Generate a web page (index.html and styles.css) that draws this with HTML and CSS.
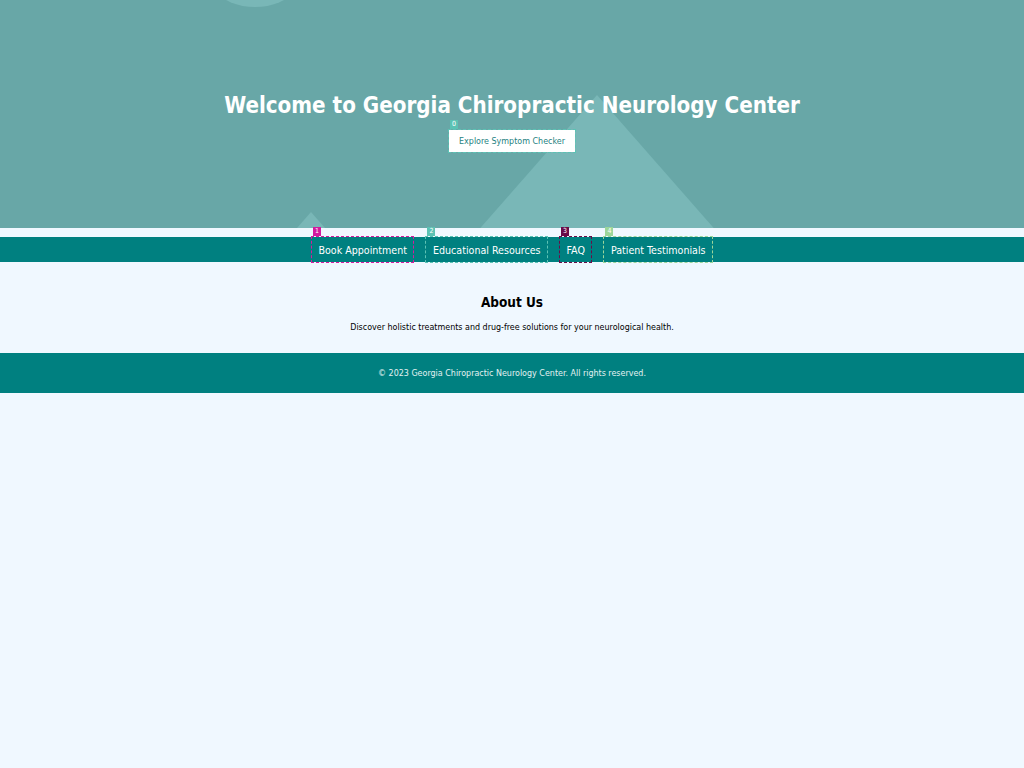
FILE: index.html
```html
<!DOCTYPE html>
<html lang="en">
<head>
<meta charset="utf-8">
<title>Georgia Chiropractic Neurology Center</title>
<link rel="stylesheet" href="styles.css">
</head>
<body>
<header class="hero">
  <svg class="hero-shapes" viewBox="0 0 1024 228" width="1024" height="228" aria-hidden="true">
    <circle cx="255" cy="-57" r="64" fill="#79b7b7"/>
    <polygon points="597,95 740,258 454,258" fill="#79b7b7"/>
    <polygon points="311,212 346,252 276,252" fill="#79b7b7"/>
  </svg>
  <div class="hero-content">
    <h1 class="hero-title">Welcome to Georgia Chiropractic Neurology Center</h1>
    <a class="cta mark mark-0" href="#">Explore Symptom Checker<span class="badge">0</span></a>
  </div>
</header>
<nav class="nav">
  <a class="nav-link mark mark-1" href="#">Book Appointment<span class="badge">1</span></a>
  <a class="nav-link mark mark-2" href="#">Educational Resources<span class="badge">2</span></a>
  <a class="nav-link mark mark-3" href="#">FAQ<span class="badge">3</span></a>
  <a class="nav-link mark mark-4" href="#">Patient Testimonials<span class="badge">4</span></a>
</nav>
<section class="about">
  <h2 class="about-title">About Us</h2>
  <p class="about-text">Discover holistic treatments and drug-free solutions for your neurological health.</p>
</section>
<footer class="footer">
  <p class="footer-text">© 2023 Georgia Chiropractic Neurology Center. All rights reserved.</p>
</footer>
</body>
</html>
```
FILE: styles.css
```css
* { box-sizing: border-box; }

body {
  margin: 0;
  background: #f0f8ff;
  font-family: "DejaVu Sans Condensed", "DejaVu Sans", "Liberation Sans", sans-serif;
  font-stretch: condensed;
  color: #000;
}

.hero {
  position: relative;
  height: 228px;
  background: #68a7a7;
  overflow: hidden;
}

.hero-shapes {
  position: absolute;
  left: 0;
  top: 0;
  display: block;
}

.hero-content {
  position: relative;
  display: flex;
  flex-direction: column;
  align-items: center;
  padding-top: 91px;
}

.hero-title {
  margin: 0;
  font-size: 22.2px;
  line-height: 28px;
  font-weight: bold;
  color: #fff;
}

.cta {
  position: relative;
  margin-top: 11px;
  display: block;
  background: #fff;
  color: #1f8282;
  text-decoration: none;
  font-size: 8.9px;
  line-height: 10px;
  padding: 6px 10px;
  white-space: nowrap;
}

.mark { outline: 1px dashed; outline-offset: 0; }
.mark-0 { outline-color: #5cc2b4; }
.mark-1 { outline-color: #d41a9e; }
.mark-2 { outline-color: #5cc2b4; }
.mark-3 { outline-color: #6a0c48; }
.mark-4 { outline-color: #9cd69a; }

.badge {
  position: absolute;
  left: 1px;
  top: -10px;
  width: 8px;
  height: 9px;
  font-size: 7px;
  line-height: 9px;
  text-align: center;
  color: #fff;
}
.mark-0 .badge { background: #5cc2b4; }
.mark-1 .badge { background: #d41a9e; }
.mark-2 .badge { background: #5cc2b4; }
.mark-3 .badge { background: #6a0c48; }
.mark-4 .badge { background: #9cd69a; }

.nav {
  margin-top: 9px;
  height: 25px;
  background: #008080;
  display: flex;
  justify-content: center;
  align-items: stretch;
  gap: 13px;
}

.nav-link {
  position: relative;
  display: flex;
  align-items: center;
  padding: 0 6.5px;
  color: #fff;
  text-decoration: none;
  font-size: 10.6px;
}

.about {
  padding: 31px 20px 20px;
  text-align: center;
}

.about-title {
  margin: 0 0 11px;
  font-size: 13.5px;
  line-height: 18px;
  font-weight: bold;
}

.about-text {
  margin: 0;
  font-size: 8.9px;
  line-height: 11px;
}

.footer {
  height: 40px;
  background: #008080;
  display: flex;
  align-items: center;
  justify-content: center;
}

.footer-text {
  margin: 0;
  font-size: 8.9px;
  color: #e2f1f1;
}
```
